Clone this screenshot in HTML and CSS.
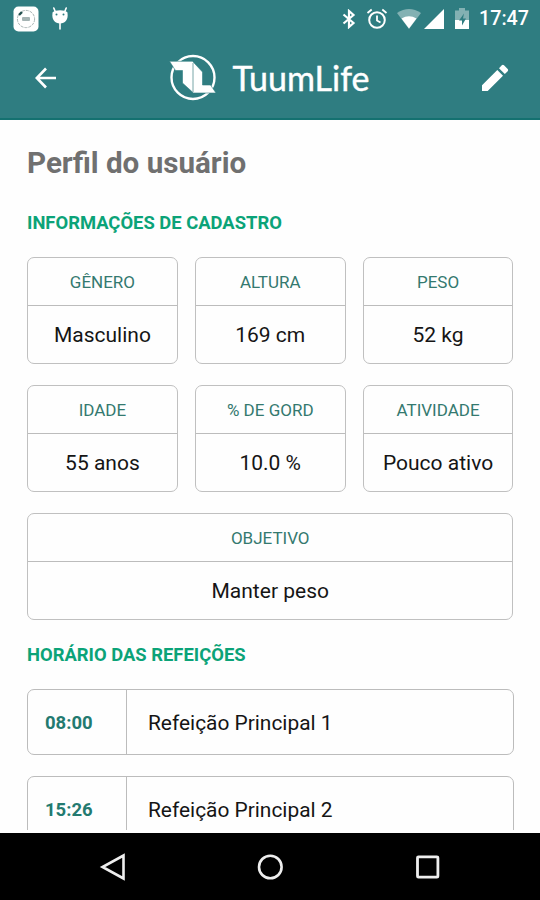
FILE: index.html
```html
<!DOCTYPE html>
<html lang="pt-BR">
<head>
  <meta charset="UTF-8">
  <meta name="viewport" content="width=device-width, initial-scale=1.0">
  <title>TuumLife - Perfil do usuário</title>
  <link rel="stylesheet" href="styles.css">
</head>
<body>
  <header class="header">
    <div class="status-bar">
      <svg class="icon-app" width="26" height="26" viewBox="0 0 26 26">
        <rect x=".5" y=".5" width="25" height="25" rx="5" fill="#fff"/>
        <circle cx="13" cy="13" r="8.6" fill="none" stroke="#a9b5b5" stroke-width="1" stroke-dasharray="3 1"/>
        <path d="M6 9l3-3" stroke="#24504f" stroke-width="2.4"/>
        <rect x="9" y="11" width="8" height="4" rx="1" fill="#a4b3b3"/>
      </svg>
      <svg class="icon-debug" width="18" height="24" viewBox="0 0 18 24">
        <path d="M4 4L2.8 1M14 4l1.2-3M9 16v6" stroke="#fff" stroke-width="1.6" stroke-linecap="round"/>
        <path d="M1.5 5.5C4 2.5 14 2.5 16.5 5.5C17.5 13 14 16.5 9 16.5S.5 13 1.5 5.5z" fill="#fff"/>
        <circle cx="5.5" cy="7.5" r="1" fill="#2f7d81"/>
        <circle cx="12.5" cy="7.5" r="1" fill="#2f7d81"/>
      </svg>
      <div class="status-right">
        <svg class="icon-bluetooth" width="14" height="20" viewBox="0 0 14 20">
          <path d="M1.5 5.5l10 8.5L7 18V2l4.500 4-10 8.500" fill="none" stroke="#fff" stroke-width="2.200"/>
        </svg>
        <svg class="icon-alarm" width="22" height="22" viewBox="0 0 22 22">
          <circle cx="11" cy="12" r="7.8" fill="none" stroke="#fff" stroke-width="2"/>
          <path d="M11 7.500v5l3.500 2M1.500 5L5.700 1.500M20.500 5l-4.200-3.500" fill="none" stroke="#fff" stroke-width="1.800"/>
        </svg>
        <svg class="icon-wifi" width="24" height="20" viewBox="0 0 24 20">
          <path d="M0 4Q12-4 24 4L12 20z" fill="#83b1b3"/>
          <path d="M4.500 9.500Q12 5 19.500 9.500L12 19.500z" fill="#fff"/>
        </svg>
        <svg class="icon-signal" width="20" height="20" viewBox="0 0 20 20">
          <path d="M20 0v20H0z" fill="#fff"/>
        </svg>
        <svg class="icon-battery" width="14" height="21" viewBox="0 0 14 21">
          <path d="M0 2.500h4V0h6v2.500h4V21H0z" fill="#83b1b3"/>
          <path d="M0 12h14v9H0z" fill="#fff"/>
          <path d="M9 5.500L4 12.500h3v5l4-7H8z" fill="#2f7d81"/>
        </svg>
        <span class="clock">17:47</span>
      </div>
    </div>
    <div class="toolbar">
      <svg class="back" width="22" height="22" viewBox="0 0 22 22">
        <path d="M11 1.500L1.800 11l9.200 9.500M2 11h19" fill="none" stroke="#fff" stroke-width="2.600"/>
      </svg>
      <div class="brand">
        <svg width="48" height="48" viewBox="0 0 48 48">
          <circle cx="24" cy="23.500" r="21.500" fill="none" stroke="#fff" stroke-width="2.400"/>
          <path d="M.5 7.300H23.500L33.500 18V31H41.500L47 39H24.500L13.500 29V16.500H6.500z" fill="#fff" stroke="#2f7d81" stroke-width=".6"/>
          <path d="M24 9v29" stroke="#78a6a8" stroke-width="1"/>
        </svg>
        <span class="brand-name">TuumLife</span>
      </div>
      <svg class="edit" width="27" height="27" viewBox="0 0 27 27">
        <path d="M0 21.300V27h5.700L21 11.700 15.300 6zM25.700 7.200a1.600 1.600 0 0 0 0-2.200L22 1.300a1.600 1.600 0 0 0-2.200 0L17 4.200l5.800 5.800z" fill="#fff"/>
      </svg>
    </div>
  </header>

  <main class="content">
    <h1>Perfil do usuário</h1>

    <h2>INFORMAÇÕES DE CADASTRO</h2>
    <div class="cards">
      <div class="card">
        <div class="label">GÊNERO</div>
        <div class="value">Masculino</div>
      </div>
      <div class="card">
        <div class="label">ALTURA</div>
        <div class="value">169 cm</div>
      </div>
      <div class="card">
        <div class="label">PESO</div>
        <div class="value">52 kg</div>
      </div>
      <div class="card">
        <div class="label">IDADE</div>
        <div class="value">55 anos</div>
      </div>
      <div class="card">
        <div class="label">% DE GORD</div>
        <div class="value">10.0 %</div>
      </div>
      <div class="card">
        <div class="label">ATIVIDADE</div>
        <div class="value">Pouco ativo</div>
      </div>
      <div class="card wide">
        <div class="label">OBJETIVO</div>
        <div class="value">Manter peso</div>
      </div>
    </div>

    <h2 class="meals-title">HORÁRIO DAS REFEIÇÕES</h2>
    <div class="meals">
      <div class="meal">
        <div class="time">08:00</div>
        <div class="meal-name">Refeição Principal 1</div>
      </div>
      <div class="meal">
        <div class="time">15:26</div>
        <div class="meal-name">Refeição Principal 2</div>
      </div>
    </div>
  </main>

  <nav class="nav-bar">
    <svg width="28" height="30" viewBox="0 0 28 30">
      <path d="M24.500 3.500v23L3.500 15z" fill="none" stroke="#eee" stroke-width="2.600"/>
    </svg>
    <svg width="28" height="30" viewBox="0 0 28 30">
      <circle cx="14.300" cy="15" r="11.300" fill="none" stroke="#eee" stroke-width="2.600"/>
    </svg>
    <svg width="28" height="30" viewBox="0 0 28 30">
      <rect x="4.500" y="4.800" width="20.400" height="20.400" rx="1" fill="none" stroke="#eee" stroke-width="2.800"/>
    </svg>
  </nav>
</body>
</html>
```
FILE: styles.css
```css
* {
  box-sizing: border-box;
}
body {
  margin: 0;
  height: 900px;
  display: flex;
  flex-direction: column;
  overflow: hidden;
  background-color: #fefefe;
  font-family: Roboto, sans-serif;
}

/* Header */
.header {
  height: 120px;
  flex-shrink: 0;
  background-color: #2f7d81;
  border-bottom: 2px solid #147170;
  color: #fff;
}
.status-bar {
  height: 37px;
  display: flex;
  align-items: center;
  padding: 0 11px 0 13px;
}
.icon-debug {
  margin-left: 12px;
}
.status-right {
  margin-left: auto;
  display: flex;
  align-items: center;
}
.icon-alarm {
  margin-left: 10px;
}
.icon-wifi {
  margin-left: 9px;
}
.icon-signal {
  margin-left: 3px;
}
.icon-battery {
  margin-left: 11px;
}
.clock {
  margin-left: 10px;
  font-size: 19.7px;
  font-weight: 500;
}
.toolbar {
  height: 81px;
  display: flex;
  align-items: center;
  justify-content: space-between;
  padding: 0 31px 0 35px;
}
.brand {
  display: flex;
  align-items: center;
}
.brand-name {
  margin-left: 15px;
  font-family: Lato, sans-serif;
  font-size: 34px;
  line-height: 48px;
  -webkit-text-stroke: 0.4px #fff;
}

/* Profile */
.content {
  height: 710px;
  flex-shrink: 0;
  padding: 0 26.5px 0 27px;
  overflow: hidden;
}
h1 {
  margin: 25px 0 0;
  font-size: 29.6px;
  line-height: 36px;
  color: #707070;
}
h2 {
  margin: 30px 0 23px;
  font-size: 18.4px;
  line-height: 23px;
  color: #0ba378;
}
.cards {
  display: grid;
  grid-template-columns: repeat(3, 1fr);
  gap: 21px 17px;
}
.card {
  height: 107px;
  border: 1.5px solid #c0c0c0;
  border-radius: 7px;
  text-align: center;
}
.wide {
  grid-column: span 3;
}
.label {
  height: 48px;
  border-bottom: 1px solid #bcbcbc;
  font-size: 17px;
  line-height: 49px;
  color: #34796f;
}
.value {
  font-size: 21px;
  line-height: 58px;
  color: #151515;
}
.meals-title {
  margin: 23px 0;
}
.meals {
  display: flex;
  flex-direction: column;
  gap: 21px;
}
.meal {
  height: 66px;
  display: flex;
  border: 1px solid #bcbcbc;
  border-radius: 7px;
  line-height: 66px;
}
.time {
  width: 99px;
  padding-left: 17px;
  border-right: 1px solid #bcbcbc;
  font-size: 18.5px;
  font-weight: bold;
  color: #237a70;
}
.meal-name {
  padding-left: 21px;
  font-size: 20.9px;
  color: #151515;
}

/* Android navigation */
.nav-bar {
  height: 67px;
  margin-top: auto;
  display: flex;
  align-items: center;
  justify-content: space-between;
  padding: 0 99px;
  background-color: #000;
}
```
